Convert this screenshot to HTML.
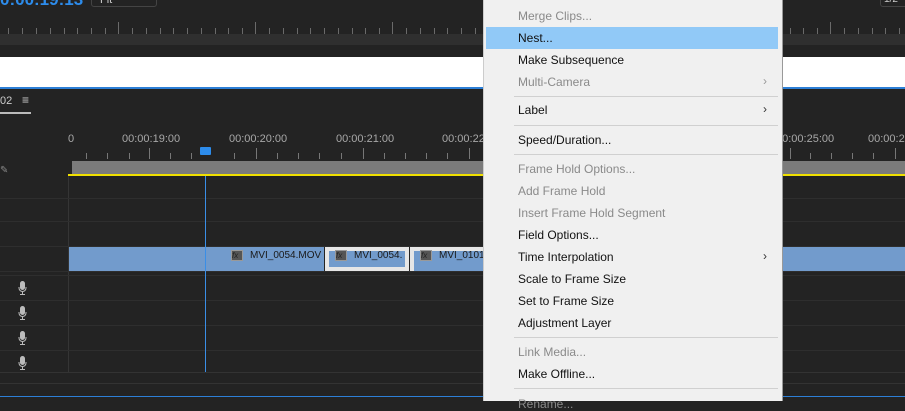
<!DOCTYPE html>
<html><head><meta charset="utf-8"><style>
*{margin:0;padding:0;box-sizing:border-box}
body{width:905px;height:401px;overflow:hidden;background:#232323;position:relative;font-family:"Liberation Sans",Arial,sans-serif}
.a{position:absolute}
.tc{color:#a8a8a8;font-size:11px}
.mi{position:absolute;left:518px;font-size:12px;color:#111;font-family:"Liberation Sans",Arial,sans-serif}
.dis{color:#8a8a8a}
.sep{position:absolute;left:514px;width:264px;height:1px;background:#d0d0d0}
.arr{position:absolute;left:763px;font-size:12px;color:#333}
.hl{height:1px;background:#2e2e2e;left:0;width:905px}
</style></head><body>
<div class="a" style="left:0;top:-10px;color:#2d8ceb;font-size:17px;font-weight:bold">0:00:19:13</div>
<div class="a" style="left:91px;top:-4px;width:66px;height:11px;border:1px solid #444;border-radius:3px;color:#ccc;font-size:11px;padding-left:8px;line-height:6px">Fit</div>
<div class="a" style="left:880px;top:-4px;width:30px;height:11px;border:1px solid #444;border-radius:3px;color:#ccc;font-size:10px;padding-left:3px;line-height:6px">1/2</div>
<svg class="a" style="left:0;top:20px" width="905" height="14">
<g stroke="#6a6a6a" stroke-width="1">
<path d="M8.5 8v6M22.5 8v6M36.5 8v6M50.5 8v6M64.5 8v6M77.5 8v6M91.5 8v6M105.5 8v6M118.5 2v12M132.5 8v6M146.5 8v6M160.5 8v6M173.5 8v6M187.5 8v6M201.5 8v6M215.5 8v6M228.5 8v6M242.5 8v6M255.5 2v12M269.5 8v6M283.5 8v6M297.5 8v6M310.5 8v6M324.5 8v6M338.5 8v6M352.5 8v6M365.5 8v6M379.5 8v6M392.5 2v12M406.5 8v6M420.5 8v6M434.5 8v6M447.5 8v6M461.5 8v6M475.5 8v6M790.5 8v6M803.5 8v6M817.5 8v6M830.5 2v12M844.5 8v6M858.5 8v6M872.5 8v6M885.5 8v6M899.5 8v6"/>
</g></svg>
<div class="a" style="left:0;top:34px;width:905px;height:11px;background:#2f2f2f"></div>
<div class="a" style="left:0;top:57px;width:905px;height:30px;background:#fff"></div>
<div class="a" style="left:0;top:87px;width:905px;height:2px;background:#2d7fd6"></div>
<div class="a" style="left:0;top:95px;color:#ccc;font-size:11px">02</div>
<div class="a" style="left:22px;top:93px;color:#ccc;font-size:12px">≡</div>
<div class="a" style="left:0;top:112px;width:31px;height:2px;background:#bbb"></div>
<div class="a tc" style="left:68px;top:133px">0</div>
<div class="a tc" style="left:122px;top:133px">00:00:19:00</div>
<div class="a tc" style="left:229px;top:133px">00:00:20:00</div>
<div class="a tc" style="left:336px;top:133px">00:00:21:00</div>
<div class="a tc" style="left:442px;top:133px">00:00:22:00</div>
<div class="a tc" style="left:776px;top:133px">00:00:25:00</div>
<div class="a tc" style="left:868px;top:133px">00:00:26:00</div>
<svg class="a" style="left:0;top:146px" width="905" height="14">
<g stroke="#777"><path d="M86.5 7v6M107.5 7v6M129.5 7v6M149.5 2v11M170.5 7v6M191.5 7v6M234.5 7v6M256.5 2v11M277.5 7v6M298.5 7v6M319.5 7v6M341.5 7v6M363.5 2v11M384.5 7v6M405.5 7v6M426.5 7v6M447.5 7v6M469.5 2v11M790.5 2v11M810.5 7v6M831.5 7v6M852.5 7v6M873.5 7v6M895.5 2v11"/></g>
</svg>
<div class="a" style="left:200px;top:147px;width:11px;height:8px;background:#2d8ceb;border-radius:1px"></div>
<div class="a" style="left:0;top:165px;color:#888;font-size:10px">✎</div>
<div class="a" style="left:72px;top:161px;width:833px;height:13px;background:#7b7b7b"></div>
<div class="a" style="left:68px;top:174px;width:837px;height:2px;background:#f0e000"></div>
<div class="a" style="left:68px;top:176px;width:1px;height:196px;background:#353535"></div>
<div class="a hl" style="top:198px"></div>
<div class="a hl" style="top:221px"></div>
<div class="a hl" style="top:246px"></div>
<div class="a hl" style="top:271px"></div>
<div class="a hl" style="top:275px"></div>
<div class="a hl" style="top:300px"></div>
<div class="a hl" style="top:325px"></div>
<div class="a hl" style="top:350px"></div>
<div class="a hl" style="top:372px;background:#333"></div>
<div class="a hl" style="top:383px;background:#333"></div>
<div class="a" style="left:0;top:396px;width:905px;height:1px;background:#2d7fd6"></div>
<div class="a" style="left:69px;top:247px;width:255px;height:24px;background:#729bcc"></div>
<div class="a" style="left:231px;top:250px;width:12px;height:11px;background:#555;border:1px solid #999;font-size:8px;color:#222;font-style:italic;line-height:9px">fx</div>
<div class="a" style="left:250px;top:250px;font-size:10px;color:#1a1a1a">MVI_0054.MOV</div>
<div class="a" style="left:325px;top:247px;width:84px;height:24px;background:#e6e6e6"></div>
<div class="a" style="left:329px;top:251px;width:76px;height:16px;background:#729bcc"></div>
<div class="a" style="left:335px;top:250px;width:12px;height:11px;background:#555;border:1px solid #999;font-size:8px;color:#222;font-style:italic;line-height:9px">fx</div>
<div class="a" style="left:354px;top:250px;font-size:10px;color:#1a1a1a">MVI_0054.</div>
<div class="a" style="left:410px;top:247px;width:495px;height:24px;background:#729bcc"></div>
<div class="a" style="left:410px;top:247px;width:74px;height:4px;background:#e6e6e6"></div>
<div class="a" style="left:410px;top:247px;width:4px;height:24px;background:#e6e6e6"></div>
<div class="a" style="left:420px;top:250px;width:12px;height:11px;background:#555;border:1px solid #999;font-size:8px;color:#222;font-style:italic;line-height:9px">fx</div>
<div class="a" style="left:439px;top:250px;font-size:10px;color:#1a1a1a">MVI_0101.</div>
<div class="a" style="left:205px;top:176px;width:1px;height:196px;background:#3a8ee6"></div>
<svg class="a" style="left:17px;top:281px" width="12" height="90"><g fill="#bbb" stroke="#bbb">
<rect x="3.5" y="0.5" width="4" height="8" rx="2"/><path d="M2 6v1a3.5 3.5 0 0 0 7 0v-1M5.5 11v2M3 13.5h5" fill="none"/>
<rect x="3.5" y="25.5" width="4" height="8" rx="2"/><path d="M2 31v1a3.5 3.5 0 0 0 7 0v-1M5.5 36v2M3 38.5h5" fill="none"/>
<rect x="3.5" y="50.5" width="4" height="8" rx="2"/><path d="M2 56v1a3.5 3.5 0 0 0 7 0v-1M5.5 61v2M3 63.5h5" fill="none"/>
<rect x="3.5" y="75.5" width="4" height="8" rx="2"/><path d="M2 81v1a3.5 3.5 0 0 0 7 0v-1M5.5 86v2M3 88.5h5" fill="none"/>
</g></svg>
<div class="a" style="left:483px;top:0;width:300px;height:401px;background:#f0f0f0;border-left:1px solid #ccc;border-right:1px solid #999"></div>
<div class="a" style="left:486px;top:27px;width:292px;height:22px;background:#91c9f7"></div>
<div class="mi dis" style="top:9px">Merge Clips...</div>
<div class="mi" style="top:31px">Nest...</div>
<div class="mi" style="top:53px">Make Subsequence</div>
<div class="mi dis" style="top:75px">Multi-Camera</div><div class="arr" style="top:74px;color:#999">›</div>
<div class="sep" style="top:96px"></div>
<div class="mi" style="top:103px">Label</div><div class="arr" style="top:102px">›</div>
<div class="sep" style="top:125px"></div>
<div class="mi" style="top:133px">Speed/Duration...</div>
<div class="sep" style="top:154px"></div>
<div class="mi dis" style="top:162px">Frame Hold Options...</div>
<div class="mi dis" style="top:184px">Add Frame Hold</div>
<div class="mi dis" style="top:206px">Insert Frame Hold Segment</div>
<div class="mi" style="top:228px">Field Options...</div>
<div class="mi" style="top:250px">Time Interpolation</div><div class="arr" style="top:249px">›</div>
<div class="mi" style="top:272px">Scale to Frame Size</div>
<div class="mi" style="top:294px">Set to Frame Size</div>
<div class="mi" style="top:316px">Adjustment Layer</div>
<div class="sep" style="top:337px"></div>
<div class="mi dis" style="top:345px">Link Media...</div>
<div class="mi" style="top:367px">Make Offline...</div>
<div class="sep" style="top:388px"></div>
<div class="mi dis" style="top:397px">Rename...</div>
</body></html>
